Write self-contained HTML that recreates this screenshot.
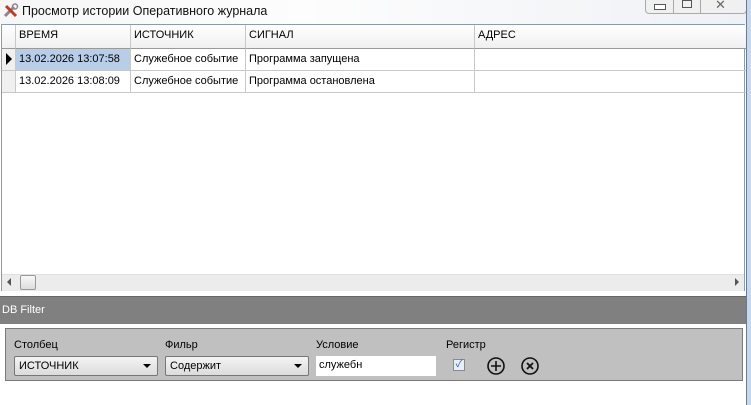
<!DOCTYPE html>
<html><head><meta charset="utf-8"><style>
body{margin:0;width:751px;height:405px;overflow:hidden;background:#fff;font-family:"Liberation Sans","Noto Sans CJK SC",sans-serif;font-size:11px;position:relative}
.a{position:absolute}
.title{left:22px;top:4px;font-size:12.5px;color:#111}
.grid{left:1px;top:24px;width:744px;height:267px;background:#fff;border:1px solid #8a9ab0;box-sizing:border-box}
.cell{position:absolute;box-sizing:border-box;border-right:1px solid #c8c8c8;border-bottom:1px solid #c8c8c8;padding:4px 0 0 3px;white-space:nowrap;color:#000}
.h{background:linear-gradient(#fff,#f0f0f0);border-bottom:1px solid #999;height:24px}
.cb{height:20px;border:1px solid #777;border-radius:2px;background:linear-gradient(#f4f4f4,#dcdcdc);box-sizing:border-box;padding:3px 4px}
</style></head><body>
<div class="a" style="left:0;top:0;width:751px;height:24px;background:linear-gradient(90deg,#f6f6f6,#fdfdfd 40%,#eef1f5)"></div>
<svg class="a" style="left:3px;top:3px" width="16" height="16" viewBox="0 0 16 16"><path d="M2 13L11 4" stroke="#888" stroke-width="3"/><path d="M3 3L13 13" stroke="#c0392b" stroke-width="3"/><circle cx="12" cy="3.5" r="2.5" fill="none" stroke="#888" stroke-width="1.5"/></svg>
<div class="a title">Просмотр истории Оперативного журнала</div>
<div class="a" style="left:645px;top:-1px;width:100px;height:14px;border:1px solid #aaa;border-top:none;border-radius:0 0 4px 4px;background:#f0f0f0"></div>
<div class="a" style="left:673px;top:0;width:1px;height:13px;background:#aaa"></div>
<div class="a" style="left:700px;top:0;width:1px;height:13px;background:#aaa"></div>
<div class="a" style="left:654px;top:4px;width:10px;height:4px;border:1px solid #555;background:#fff"></div>
<div class="a" style="left:682px;top:0px;width:8px;height:6px;border:1px solid #555"></div>
<div class="a" style="left:715px;top:-3px;font-size:13px;color:#666">✕</div>
<div class="grid a">
<div class="cell h" style="left:0;top:0;width:14px"></div>
<div class="cell h" style="left:14px;top:0;width:115px">ВРЕМЯ</div>
<div class="cell h" style="left:129px;top:0;width:115px">ИСТОЧНИК</div>
<div class="cell h" style="left:244px;top:0;width:229px">СИГНАЛ</div>
<div class="cell h" style="left:473px;top:0;width:271px;border-right:none">АДРЕС</div>
<div class="cell" style="left:0;top:24px;width:14px;height:22px;background:#f0f0f0"></div>
<div class="a" style="left:4px;top:28px;width:0;height:0;border-left:6px solid #000;border-top:6px solid transparent;border-bottom:6px solid transparent"></div>
<div class="cell" style="left:14px;top:24px;width:115px;height:22px;background:#b8cde8">13.02.2026 13:07:58</div>
<div class="cell" style="left:129px;top:24px;width:115px;height:22px">Служебное событие</div>
<div class="cell" style="left:244px;top:24px;width:229px;height:22px">Программа запущена</div>
<div class="cell" style="left:473px;top:24px;width:271px;height:22px;border-right:none"></div>
<div class="cell" style="left:0;top:46px;width:14px;height:22px;background:#f0f0f0"></div>
<div class="cell" style="left:14px;top:46px;width:115px;height:22px">13.02.2026 13:08:09</div>
<div class="cell" style="left:129px;top:46px;width:115px;height:22px">Служебное событие</div>
<div class="cell" style="left:244px;top:46px;width:229px;height:22px">Программа остановлена</div>
<div class="cell" style="left:473px;top:46px;width:271px;height:22px;border-right:none"></div>
<div class="a" style="left:0;top:249px;width:742px;height:16px;background:#ececec;border-top:1px solid #e0e0e0"></div>
<div class="a" style="left:5px;top:253px;border-right:4px solid #555;border-top:4px solid transparent;border-bottom:4px solid transparent"></div>
<div class="a" style="left:18px;top:250px;width:14px;height:13px;border:1px solid #999;border-radius:2px;background:linear-gradient(#f8f8f8,#ddd)"></div>
<div class="a" style="left:733px;top:253px;border-left:4px solid #555;border-top:4px solid transparent;border-bottom:4px solid transparent"></div>
</div>
<div class="a" style="left:0;top:296px;width:746px;height:27px;background:#808080;border-top:1px solid #666"></div>
<div class="a" style="left:2px;top:304px;color:#fff;font-size:11px">DB Filter</div>
<div class="a" style="left:5px;top:328px;width:738px;height:53px;background:#c0c0c0;border:1px solid #7a7a7a;box-sizing:border-box"></div>
<div class="a" style="left:14px;top:339px">Столбец</div>
<div class="a" style="left:165px;top:339px">Фильр</div>
<div class="a" style="left:316px;top:339px">Условие</div>
<div class="a" style="left:446px;top:339px">Регистр</div>
<div class="a cb" style="left:14px;top:356px;width:144px">ИСТОЧНИК</div>
<div class="a" style="left:143px;top:364px;border-top:4px solid #000;border-left:4px solid transparent;border-right:4px solid transparent"></div>
<div class="a cb" style="left:165px;top:356px;width:144px">Содержит</div>
<div class="a" style="left:294px;top:364px;border-top:4px solid #000;border-left:4px solid transparent;border-right:4px solid transparent"></div>
<div class="a" style="left:316px;top:356px;width:120px;height:20px;background:#fff;box-sizing:border-box;padding:3px 3px">служебн</div>
<div class="a" style="left:453px;top:359px;width:10px;height:10px;border:1px solid #8a8a8a;background:#e8eef8;font-size:10px;line-height:10px;text-align:center;color:#33569a">✓</div>
<svg class="a" style="left:486px;top:356px" width="60" height="20"><circle cx="10" cy="10" r="8" fill="none" stroke="#111" stroke-width="1.6"/><path d="M10 5V15M5 10H15" stroke="#111" stroke-width="1.6"/><circle cx="44" cy="10" r="8" fill="none" stroke="#111" stroke-width="1.6"/><path d="M41 7L47 13M47 7L41 13" stroke="#111" stroke-width="1.8"/></svg>
<div class="a" style="left:746px;top:0;width:5px;height:405px;background:#c8d8ec;border-left:1px solid #6a7a90"></div>
</body></html>
